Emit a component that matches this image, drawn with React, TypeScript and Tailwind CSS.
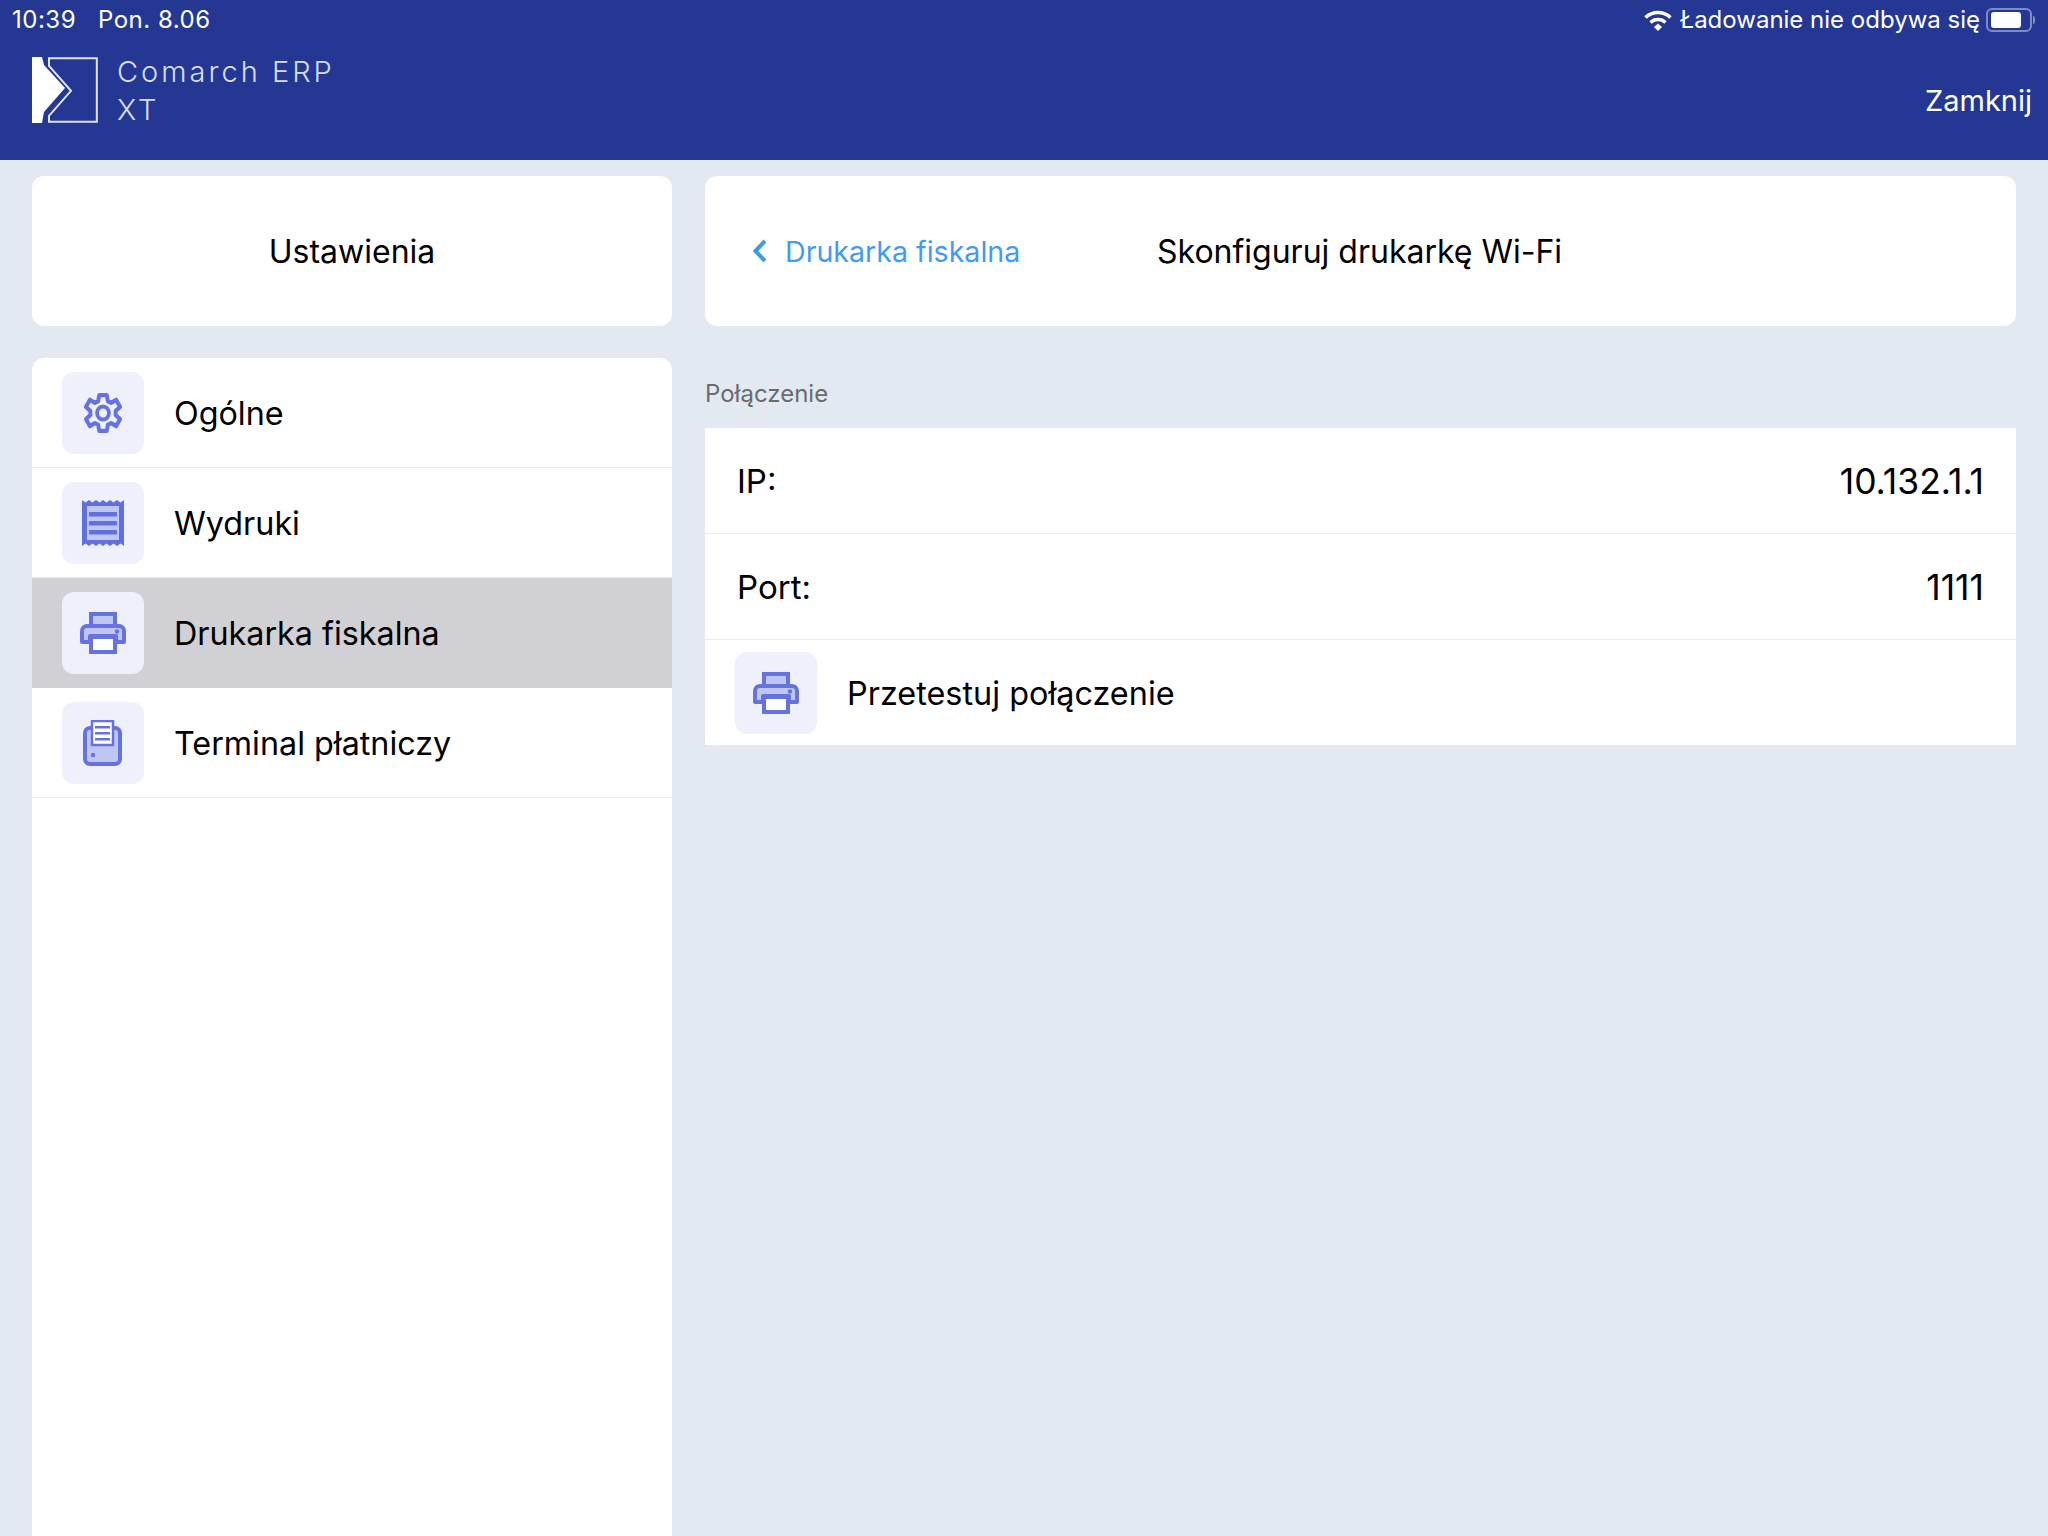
const menuItems = [
  { key: "general", label: "Ogólne" },
  { key: "prints", label: "Wydruki" },
  { key: "printer", label: "Drukarka fiskalna", active: true },
  { key: "terminal", label: "Terminal płatniczy" },
];

function GearIcon() {
  return (
    <svg width="38" height="40" viewBox="2.500 1.200 35 33.600" preserveAspectRatio="none" fill="none">
      <path
        d="M16.500 3h7l1 5.200 3 1.300 4.600-2.600 3.600 6-4.100 3.400v3.400l4.100 3.400-3.600 6-4.600-2.600-3 1.300-1 5.200h-7l-1-5.200-3-1.300-4.600 2.600-3.600-6 4.100-3.400v-3.400l-4.100-3.400 3.600-6 4.600 2.600 3-1.300z"
        fill="#eef0fc"
        stroke="#6672e0"
        strokeWidth="3.600"
        strokeLinejoin="round"
      />
      <circle cx="20" cy="18" r="5.500" fill="#eef0fc" stroke="#6672e0" strokeWidth="3.400" />
    </svg>
  );
}

function ReceiptIcon() {
  return (
    <svg width="42" height="46" viewBox="0 0 42 46">
      <path
        d="M0 0l3.500 2.500L7 0l3.500 2.500L14 0l3.500 2.500L21 0l3.500 2.500L28 0l3.500 2.500L35 0l3.500 2.500L42 0v46l-3.500-2.500L35 46l-3.500-2.500L28 46l-3.500-2.500L21 46l-3.500-2.500L14 46l-3.500-2.500L7 46l-3.500-2.500L0 46z"
        fill="#6170e0"
      />
      <rect x="5" y="6" width="32" height="34" fill="#c0c6f2" />
      <rect x="7" y="12" width="28" height="4.500" fill="#6170e0" />
      <rect x="7" y="21" width="28" height="4.500" fill="#6170e0" />
      <rect x="7" y="30" width="28" height="4.500" fill="#6170e0" />
    </svg>
  );
}

function PrinterIcon() {
  return (
    <svg width="46" height="42" viewBox="0 0 46 42">
      <rect x="11" y="2" width="24" height="16" fill="#c0c6f2" stroke="#6672e0" strokeWidth="4" />
      <path
        d="M7 14h32a5 5 0 0 1 5 5v11h-8v-6H10v6H2V19a5 5 0 0 1 5-5z"
        fill="#c0c6f2"
        stroke="#6672e0"
        strokeWidth="4"
        strokeLinejoin="round"
      />
      <rect x="11" y="25" width="24" height="15" fill="#ffffff" stroke="#6672e0" strokeWidth="4" />
      <circle cx="37" cy="19.500" r="2.200" fill="#6672e0" />
    </svg>
  );
}

function TerminalIcon() {
  return (
    <svg width="40" height="46" viewBox="0 0 40 46">
      <rect x="2" y="8" width="35" height="36" rx="5" fill="#c0c6f2" stroke="#6672e0" strokeWidth="4" />
      <rect x="9" y="1" width="21" height="24" fill="#ffffff" stroke="#6672e0" strokeWidth="2.500" />
      <rect x="12" y="6" width="15" height="2.500" fill="#6672e0" />
      <rect x="12" y="12" width="15" height="2.500" fill="#6672e0" />
      <rect x="12" y="18" width="15" height="2.500" fill="#6672e0" />
      <circle cx="10" cy="35" r="2.200" fill="#6672e0" />
    </svg>
  );
}

function MenuIcon({ name }: { name: string }) {
  if (name === "general") return <GearIcon />;
  if (name === "prints") return <ReceiptIcon />;
  if (name === "printer") return <PrinterIcon />;
  return <TerminalIcon />;
}

function IconTile({ name }: { name: string }) {
  return (
    <div className="flex h-[82px] w-[82px] shrink-0 items-center justify-center rounded-[12px] bg-[#eef0fc]">
      <MenuIcon name={name} />
    </div>
  );
}

function Logo() {
  return (
    <svg width="66" height="66" viewBox="0 0 66 66" fill="none">
      <path d="M0 0h10l2 8 21 23-21 24-2 11H0z" fill="#ffffff" />
      <path d="M17 1.200h47.800v63.600H17v-6l22-25-22-25z" stroke="#dfe3f3" strokeWidth="2" />
    </svg>
  );
}

function WifiIcon() {
  return (
    <svg width="28" height="21" viewBox="0 0 28 21" fill="none">
      <path d="M1.500 7.500a18 18 0 0 1 25 0" stroke="#fff" strokeWidth="3.400" />
      <path d="M6.500 12.500a11 11 0 0 1 15 0" stroke="#fff" strokeWidth="3.400" />
      <path d="M10 17l4-3.500 4 3.500-4 4z" fill="#fff" />
    </svg>
  );
}

function Battery() {
  return (
    <div className="flex items-center gap-[1px]">
      <div className="flex h-[24px] w-[46px] items-center rounded-[6px] border-2 border-[#7f8cc4] pl-[3px]">
        <div className="h-[16px] w-[30px] rounded-[3px] bg-white" />
      </div>
      <div className="h-[8px] w-[2px] rounded-r-full bg-[#7f8cc4]" />
    </div>
  );
}

function Header() {
  return (
    <header className="h-[160px] shrink-0 bg-[#243893] text-white">
      <div className="flex h-[40px] items-center justify-between pl-[12px] pr-[13px] text-[24px]">
        <div className="flex gap-[22px] tracking-[0.5px]">
          <span>10:39</span>
          <span>Pon. 8.06</span>
        </div>
        <div className="flex items-center gap-[6px]">
          <WifiIcon />
          <span className="ml-[2px]">Ładowanie nie odbywa się</span>
          <Battery />
        </div>
      </div>
      <div className="flex items-start justify-between pl-[32px] pr-[16px]">
        <div className="mt-[17px] flex items-start gap-[19px]">
          <Logo />
          <div className="-mt-[4px] text-[29px] font-light leading-[38px] tracking-[3px] text-[#d9ddf0]">
            <div>Comarch ERP</div>
            <div>XT</div>
          </div>
        </div>
        <span className="mt-[42px] text-[29px] leading-[38px]">Zamknij</span>
      </div>
    </header>
  );
}

function Sidebar() {
  return (
    <aside className="flex w-[640px] shrink-0 flex-col gap-[32px]">
      <div className="flex h-[150px] items-center justify-center rounded-[12px] bg-white pt-[2px] text-[32px] text-black">
        Ustawienia
      </div>
      <nav className="flex-1 rounded-t-[12px] bg-white">
        {menuItems.map((item) => (
          <div
            key={item.key}
            className={
              item.active
                ? "flex h-[110px] items-center gap-[30px] bg-[#d1d0d5] pl-[30px] text-[32.300px] text-black"
                : "flex h-[110px] items-center gap-[30px] border-b border-[#e8ebf2] pl-[30px] text-[32.300px] text-black"
            }
          >
            <IconTile name={item.key} />
            <span className="pt-[3px]">{item.label}</span>
          </div>
        ))}
      </nav>
    </aside>
  );
}

function Row({ label, value }: { label: string; value: string }) {
  return (
    <div className="flex h-[106px] items-center justify-between border-b border-[#e8ebf2] px-[32px] pt-[2px] text-black">
      <span className="text-[33px]">{label}</span>
      <span className="text-[35.500px]">{value}</span>
    </div>
  );
}

function Detail() {
  return (
    <main className="flex min-w-0 flex-1 flex-col">
      <div className="flex h-[150px] items-center rounded-[12px] bg-white pl-[47px]">
        <svg width="16" height="24" viewBox="0 0 16 24" fill="none">
          <path d="M13 2L3.500 12 13 22" stroke="#3f9bdc" strokeWidth="4" />
        </svg>
        <span className="ml-[17px] w-[372px] pt-[2px] text-[28.600px] text-[#3f9bf5]">Drukarka fiskalna</span>
        <span className="pt-[2px] text-[32px] text-black">Skonfiguruj drukarkę Wi-Fi</span>
      </div>
      <div className="flex h-[102px] items-end pb-[19px] text-[24px] leading-[30px] text-[#6b6b6d]">Połączenie</div>
      <section className="bg-white">
        <Row label="IP:" value="10.132.1.1" />
        <Row label="Port:" value="1111" />
        <div className="flex h-[105px] items-center gap-[30px] pl-[30px] text-[32.400px] text-black">
          <IconTile name="printer" />
          <span className="pt-[4px]">Przetestuj połączenie</span>
        </div>
      </section>
    </main>
  );
}

export default function App() {
  return (
    <div className="flex h-[1536px] w-[2048px] flex-col overflow-hidden bg-[#e3e9f1] font-['Inter',sans-serif]">
      <Header />
      <div className="flex min-h-0 flex-1 gap-[33px] px-[32px] pt-[16px]">
        <Sidebar />
        <Detail />
      </div>
    </div>
  );
}
